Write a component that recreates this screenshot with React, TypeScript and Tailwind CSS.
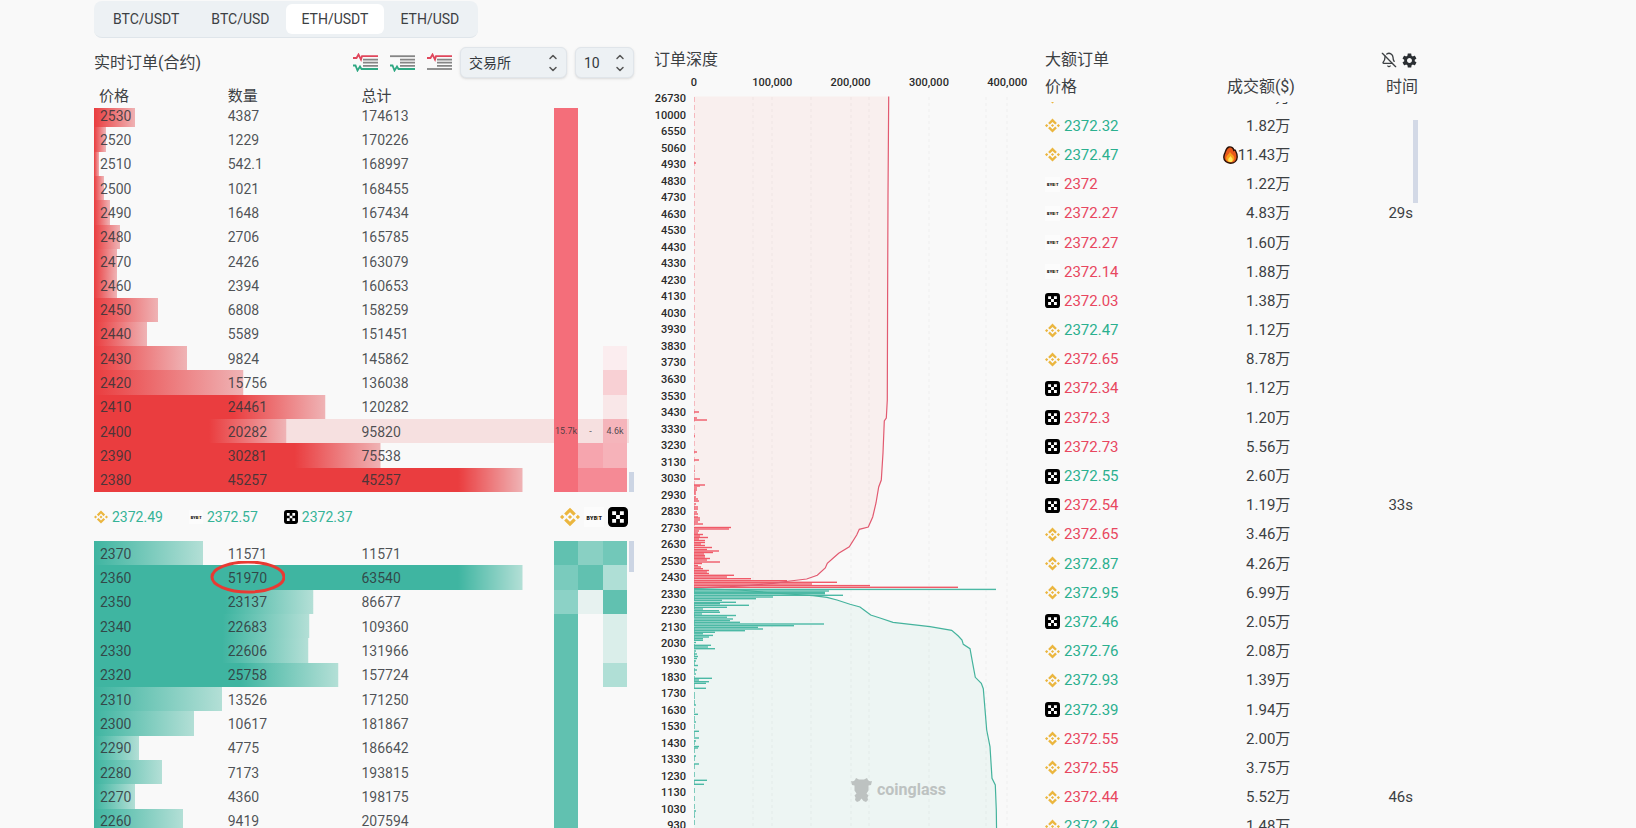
import { useState } from "react";
import { BellOff, ChevronDown, ChevronUp } from "lucide-react";
import { IoMdSettings } from "react-icons/io";

type Exchange = "binance" | "bybit" | "okx";
type Heat = (string | null)[];

interface Level {
  price: number;
  amount: number;
  total: number;
  heat: Heat;
  labels?: string[];
  marked?: boolean;
}

const MAX_AMOUNT = 45257;
const R = "#f46e7a";
const G = "#61c1b0";

const pairs = ["BTC/USDT", "BTC/USD", "ETH/USDT", "ETH/USD"];

const asks: Level[] = [
  { price: 2530, amount: 4387, total: 174613, heat: [R, null, null] },
  { price: 2520, amount: 1229, total: 170226, heat: [R, null, null] },
  { price: 2510, amount: 542.1, total: 168997, heat: [R, null, null] },
  { price: 2500, amount: 1021, total: 168455, heat: [R, null, null] },
  { price: 2490, amount: 1648, total: 167434, heat: [R, null, null] },
  { price: 2480, amount: 2706, total: 165785, heat: [R, null, null] },
  { price: 2470, amount: 2426, total: 163079, heat: [R, null, null] },
  { price: 2460, amount: 2394, total: 160653, heat: [R, null, null] },
  { price: 2450, amount: 6808, total: 158259, heat: [R, null, null] },
  { price: 2440, amount: 5589, total: 151451, heat: [R, null, null] },
  { price: 2430, amount: 9824, total: 145862, heat: [R, null, "#fbedef"] },
  { price: 2420, amount: 15756, total: 136038, heat: [R, null, "#f8d0d4"] },
  { price: 2410, amount: 24461, total: 120282, heat: [R, null, "#f9e7e8"] },
  { price: 2400, amount: 20282, total: 95820, heat: [R, null, "#f5b5bb"], labels: ["15.7k", "-", "4.6k"] },
  { price: 2390, amount: 30281, total: 75538, heat: [R, "#f6a5ae", "#f6b2b9"] },
  { price: 2380, amount: 45257, total: 45257, heat: [R, "#f58a95", "#f58a95"] },
];

const bids: Level[] = [
  { price: 2370, amount: 11571, total: 11571, heat: [G, "#89d0c3", "#72c8b9"] },
  { price: 2360, amount: 51970, total: 63540, heat: ["#7acbbd", G, "#afdfd6"], marked: true },
  { price: 2350, amount: 23137, total: 86677, heat: ["#8cd2c6", "#e7f2f0", G] },
  { price: 2340, amount: 22683, total: 109360, heat: [G, null, "#daeeea"] },
  { price: 2330, amount: 22606, total: 131966, heat: [G, null, "#daeeea"] },
  { price: 2320, amount: 25758, total: 157724, heat: [G, null, "#b0dfd6"] },
  { price: 2310, amount: 13526, total: 171250, heat: [G, null, null] },
  { price: 2300, amount: 10617, total: 181867, heat: [G, null, null] },
  { price: 2290, amount: 4775, total: 186642, heat: [G, null, null] },
  { price: 2280, amount: 7173, total: 193815, heat: [G, null, null] },
  { price: 2270, amount: 4360, total: 198175, heat: [G, null, null] },
  { price: 2260, amount: 9419, total: 207594, heat: [G, null, null] },
];

const trades: { ex: Exchange; price: string; up: boolean; value: string; time?: string; hot?: boolean }[] = [
  { ex: "binance", price: "2372.32", up: true, value: "1.12万" },
  { ex: "binance", price: "2372.32", up: true, value: "1.82万" },
  { ex: "binance", price: "2372.47", up: true, value: "11.43万", hot: true },
  { ex: "bybit", price: "2372", up: false, value: "1.22万" },
  { ex: "bybit", price: "2372.27", up: false, value: "4.83万", time: "29s" },
  { ex: "bybit", price: "2372.27", up: false, value: "1.60万" },
  { ex: "bybit", price: "2372.14", up: false, value: "1.88万" },
  { ex: "okx", price: "2372.03", up: false, value: "1.38万" },
  { ex: "binance", price: "2372.47", up: true, value: "1.12万" },
  { ex: "binance", price: "2372.65", up: false, value: "8.78万" },
  { ex: "okx", price: "2372.34", up: false, value: "1.12万" },
  { ex: "okx", price: "2372.3", up: false, value: "1.20万" },
  { ex: "okx", price: "2372.73", up: false, value: "5.56万" },
  { ex: "okx", price: "2372.55", up: true, value: "2.60万" },
  { ex: "okx", price: "2372.54", up: false, value: "1.19万", time: "33s" },
  { ex: "binance", price: "2372.65", up: false, value: "3.46万" },
  { ex: "binance", price: "2372.87", up: true, value: "4.26万" },
  { ex: "binance", price: "2372.95", up: true, value: "6.99万" },
  { ex: "okx", price: "2372.46", up: true, value: "2.05万" },
  { ex: "binance", price: "2372.76", up: true, value: "2.08万" },
  { ex: "binance", price: "2372.93", up: true, value: "1.39万" },
  { ex: "okx", price: "2372.39", up: true, value: "1.94万" },
  { ex: "binance", price: "2372.55", up: false, value: "2.00万" },
  { ex: "binance", price: "2372.55", up: false, value: "3.75万" },
  { ex: "binance", price: "2372.44", up: false, value: "5.52万", time: "46s" },
  { ex: "binance", price: "2372.24", up: true, value: "1.48万" },
];

// depth chart bars: [y, length]
const askBars = [
  [163, 2], [412, 5], [418, 3], [420, 13], [436, 1], [452, 3], [460, 5], [471, 1], [479, 6], [485, 11], [486, 6],
  [488, 3], [490, 3], [492, 2], [494, 2], [497, 2], [499, 4], [501, 5], [504, 2], [507, 4], [509, 4], [512, 3],
  [514, 4], [517, 4], [518, 6], [520, 6], [522, 4], [524, 9], [527.5, 37], [529, 35], [531, 5], [533, 4], [534.5, 9],
  [536, 6], [537.5, 14], [539, 5], [540.5, 11], [542.5, 11], [544, 7], [545.5, 11], [547.5, 18], [549.5, 13],
  [551, 25], [552.5, 19], [554, 10], [555.5, 11], [557, 11], [558.5, 16], [560, 13], [562, 26], [563.5, 8],
  [565.5, 4], [567, 7], [568.7, 9], [570.5, 15], [572, 13], [573.5, 15], [575.3, 40], [577, 33], [578.7, 57],
  [580.7, 93], [582.3, 143], [584, 118], [585.6, 176], [587.3, 264],
];
const bidBars = [
  [589.4, 302], [591, 135], [592.3, 131], [593.7, 131], [595.3, 149], [597, 79], [598.7, 62], [600.3, 28],
  [602.3, 42], [603.7, 26], [605.3, 55], [607.3, 33], [609, 9], [610.7, 25], [612.3, 26], [614, 8], [615.5, 42],
  [617.2, 33], [619, 39], [620.7, 36], [622.3, 46], [624, 130], [625.7, 100], [627.3, 64], [629, 69], [630.7, 51],
  [632.3, 21], [633.8, 9], [635.4, 19], [637, 15], [638.7, 9], [640.3, 9], [642.5, 2], [645.3, 17], [647, 14],
  [648.7, 21], [651, 2], [654, 3], [656.5, 4], [658.5, 3], [661, 2], [665.5, 4], [670, 3], [674, 2], [678.3, 18],
  [680, 5], [681.7, 15], [683.3, 12], [688.3, 12], [698, 1], [705, 2], [714.3, 4], [722, 2], [731.3, 5], [738, 5],
  [741, 2], [746.5, 5], [748, 4], [756, 2], [764, 5], [780.3, 13], [784.3, 10], [811, 2], [817, 1],
];

const askLine =
  "888.7,96.5 888,196 887.6,300 887.3,400 886.3,418 884.3,421 883,453 881.3,480 878.7,487 876,503 872.7,517 868.3,527 859.3,529.3 856.7,535 849.3,546.7 838.7,553.3 833.3,558 827.3,563.3 825.3,568 817.3,575.3 806.7,579 790,581 773,583.3 750,585.3 730,586.7 694,588";
const bidLine =
  "694,588.5 740,590 773,593 813,595.7 827,597.3 837,600 850,604.3 860,607 864,610 870.7,615 880,618 893,622.3 930,626.7 951.7,630.3 958.3,636 962,640 963.3,644.3 970,648.7 972.7,663.3 975.3,677.3 981.3,683.3 983.3,688.7 986.7,730 990,746.7 992,778.3 995.3,785 996.3,810 996.7,840";

const depthPrices = [26730, 10000, 6550, 5060, ...Array.from({ length: 41 }, (_, i) => 4930 - i * 100)];

function BinanceIcon({ className }: { className: string }) {
  return (
    <svg viewBox="0 0 24 24" className={className} fill="#ebb63f">
      <path d="M12 .8 19 7.8l-2.7 2.7L12 6.2l-4.3 4.3L5 7.8z" />
      <path d="M12 23.2 5 16.2l2.7-2.7 4.3 4.3 4.3-4.3 2.7 2.7z" />
      <path d="m12 9.5 2.5 2.5-2.5 2.5L9.5 12zM2.6 9.4 5.2 12l-2.6 2.6L0 12zM21.4 9.4 24 12l-2.6 2.6-2.6-2.6z" />
    </svg>
  );
}

function BybitIcon({ className }: { className: string }) {
  return (
    <svg viewBox="0 0 24 24" className={className}>
      <rect width="24" height="24" fill="#fcfcfc" />
      <text x="3" y="15" fontSize="6" fontWeight="900" fill="#222" fontFamily="Inter, sans-serif">
        BYB<tspan fill="#e0a030">I</tspan>T
      </text>
    </svg>
  );
}

function OkxIcon({ className }: { className: string }) {
  return (
    <svg viewBox="0 0 24 24" className={className}>
      <rect width="24" height="24" rx="5" fill="#000" />
      <path fill="#fff" d="M5 5h4.7v4.7H5zM14.3 5H19v4.7h-4.7zM9.7 9.7h4.6v4.6H9.7zM5 14.3h4.7V19H5zM14.3 14.3H19V19h-4.7z" />
    </svg>
  );
}

function ExchangeIcon({ ex, className }: { ex: Exchange; className: string }) {
  if (ex === "binance") return <BinanceIcon className={className} />;
  if (ex === "bybit") return <BybitIcon className={className} />;
  return <OkxIcon className={className} />;
}

function FireIcon() {
  return (
    <svg viewBox="0 0 15 18" className="h-[18px] w-[15px]">
      <path
        d="M6 1C8.500.5 10.500 2 10.800 4.300c.6-.4 1.200-.4 1.600.2C13.500 6.500 14.200 8.800 14.200 11c0 3.800-3 6.200-6.700 6.200S.8 14.800.8 11.200c0-2 .8-3.600 1.400-5C3 4 3.500 1.600 6 1z"
        fill="#e8581c"
        stroke="#2a1208"
        strokeWidth="1.4"
      />
      <path d="M7 5.5c.3 2 3.6 3.3 4.2 5.7.5 2.6-1.4 4.8-3.8 4.8s-4.600-1.800-4.200-4.600C3.500 9.200 6.500 8 7 5.500z" fill="#f9a01b" />
      <path d="M7.5 10c.4 1.2 2.3 2 2.2 3.7 0 1.400-1 2.300-2.300 2.300s-2.300-1-2.200-2.300c0-1.500 1.800-2.200 2.300-3.700z" fill="#ffe75a" />
    </svg>
  );
}

function BookIcon({ top, bottom }: { top: boolean; bottom: boolean }) {
  return (
    <svg viewBox="0 0 25 19" className="h-[19px] w-[25px]" fill="none" strokeWidth="1.8">
      {top ? <path d="M0 5h3.500L5.500 1.500 8 6.500 9 3.200H25" stroke="#e0475c" /> : <path d="M0 3.2h25" stroke="#858585" />}
      <path d="M10 6.600h15M10 9.700h15M10 12.800h15" stroke="#858585" />
      {bottom ? <path d="M0 12.500h2.500l2 5 2.500-4 1.500 2.500H25" stroke="#2fa883" /> : <path d="M0 16h25" stroke="#858585" />}
    </svg>
  );
}

function Picker({ label, options, className }: { label: string; options: string[]; className: string }) {
  return (
    <div className={`relative ${className}`}>
      <select
        aria-label={label}
        className="h-[31px] w-full appearance-none rounded-md border border-[#e0e5ea] bg-[#edf1f4] pl-2 text-sm text-[#33383d] shadow-sm"
      >
        {options.map((option) => (
          <option key={option}>{option}</option>
        ))}
      </select>
      <span className="pointer-events-none absolute inset-y-0 right-2 flex flex-col items-center justify-center text-[#555]">
        <ChevronUp size={12} strokeWidth={3} />
        <ChevronDown size={12} strokeWidth={3} />
      </span>
    </div>
  );
}

function LevelRows({ levels, side }: { levels: Level[]; side: "ask" | "bid" }) {
  const [from, to] = side === "ask" ? ["#ea3d3f", "#efb3b5"] : ["#3fb5a1", "#b3dfd6"];

  return (
    <tbody>
      {levels.map((level) => {
        const ratio = Math.min(level.amount / MAX_AMOUNT, 1);
        const solid = ratio > 0.9 ? 0.85 : ratio > 0.6 ? 0.7 : ratio > 0.4 ? 0.6 : 0;
        // the longest bar takes 80% of the row
        const end = ratio * 80;
        return (
          <tr
            key={level.price}
            className={level.labels ? "bg-[#f6e0e0]" : ""}
            style={{
              backgroundImage: `linear-gradient(to right, ${from} ${end * solid}%, ${to} ${end}%, transparent ${end}%)`,
            }}
          >
            <td className="pt-px pl-[6px]">{level.price}</td>
            <td className="pt-px">
              <span className="relative">
                {level.amount}
                {level.marked && (
                  <svg
                    viewBox="0 0 76 34"
                    className="absolute top-1/2 left-1/2 h-[34px] w-[76px] max-w-none -translate-x-1/2 -translate-y-1/2"
                  >
                    <ellipse cx="39" cy="16" rx="36" ry="15" fill="none" stroke="#e83a33" strokeWidth="3" />
                  </svg>
                )}
              </span>
            </td>
            <td className="pt-px">{level.total}</td>
            {level.heat.map((color, i) => (
              <td key={i} className="text-center text-[9px]" style={{ backgroundColor: color ?? undefined }}>
                {level.labels?.[i]}
              </td>
            ))}
            <td />
          </tr>
        );
      })}
    </tbody>
  );
}

function BookColumns() {
  return (
    <colgroup>
      <col className="w-[25%]" />
      <col className="w-[25%]" />
      <col />
      <col className="w-[24px]" />
      <col className="w-[25px]" />
      <col className="w-[24px]" />
      <col className="w-[2px]" />
    </colgroup>
  );
}

function OrderBook() {
  return (
    <section>
      <div className="flex h-[43px] items-center">
        <h2 className="flex-1 text-base">实时订单(合约)</h2>
        <div className="mr-2 flex gap-3">
          <button aria-label="全部"><BookIcon top bottom /></button>
          <button aria-label="买单"><BookIcon top={false} bottom /></button>
          <button aria-label="卖单"><BookIcon top bottom={false} /></button>
        </div>
        <Picker label="交易所" options={["交易所", "Binance", "Bybit", "OKX"]} className="w-[107px]" />
        <Picker label="精度" options={["10", "1", "100"]} className="ml-2 w-[59px]" />
      </div>

      <div className="flex h-6 items-center pr-[5px] text-[15px]">
        <span className="w-[25%] pl-[5px]">价格</span>
        <span className="w-[25%]">数量</span>
        <span>总计</span>
      </div>

      <div className="flex h-[384px] items-end justify-between overflow-hidden">
        <table className="h-[389px] w-full table-fixed text-sm leading-4 text-[#303438]/85">
          <BookColumns />
          <LevelRows levels={asks} side="ask" />
        </table>
        <div className="h-5 w-[5px] shrink-0 bg-[#ccd5e4]" />
      </div>

      <div className="flex h-[49px] items-center gap-[26px] pr-[6px] text-sm text-[#35b397]">
        <span className="flex items-center gap-1"><BinanceIcon className="size-[14px]" />2372.49</span>
        <span className="flex items-center gap-1"><BybitIcon className="size-[14px]" />2372.57</span>
        <span className="flex items-center gap-1"><OkxIcon className="size-[14px]" />2372.37</span>
        <span className="ml-auto flex items-center gap-1">
          <BinanceIcon className="size-5" />
          <BybitIcon className="size-5" />
          <OkxIcon className="size-5" />
        </span>
      </div>

      <div className="flex items-start justify-between">
        <table className="h-[292px] w-full table-fixed text-sm leading-4 text-[#303438]/85">
          <BookColumns />
          <LevelRows levels={bids} side="bid" />
        </table>
        <div className="h-[31px] w-[5px] shrink-0 bg-[#ccd5e4]" />
      </div>
    </section>
  );
}

function DepthChart() {
  return (
    <section>
      <h2 className="flex h-[34px] items-end text-base">订单深度</h2>
      <svg viewBox="654 72 371 756" className="w-full overflow-visible" fontSize="11" fontWeight="500" fill="#2a2a2a">
        {[0, 100000, 200000, 300000, 400000].map((v) => (
          <text key={v} x={694 + v * 0.000783} y="86" textAnchor="middle">
            {v.toLocaleString("en-US")}
          </text>
        ))}
        <polygon points={`694,96.5 ${askLine}`} fill="#f9efee" />
        <polygon points={`${bidLine} 694,840`} fill="#edf5f3" />
        {[753, 772, 811, 851, 869, 929, 986, 1007].map((x) => (
          <path key={x} d={`M${x} 97V840`} stroke="#000" strokeOpacity=".04" strokeDasharray="3 3" />
        ))}
        <path d="M694.5 97V588" stroke="#f3a4ab" strokeOpacity=".7" strokeDasharray="5 3" />
        <path d="M694.5 588V840" stroke="#7fcbbd" strokeDasharray="5 3" />
        {askBars.map(([y, w]) => (
          <rect key={y} x="694" y={y - 0.7} width={w} height="1.4" fill="#f05a68" />
        ))}
        {bidBars.map(([y, w]) => (
          <rect key={y} x="694" y={y - 0.7} width={w} height="1.4" fill="#4cb9a5" />
        ))}
        <polyline points={askLine} fill="none" stroke="#e25a70" strokeWidth="1.2" />
        <polyline points={bidLine} fill="none" stroke="#45b39d" strokeWidth="1.2" />
        {depthPrices.map((price, i) => (
          <text key={price} x="686" y={102 + i * 16.53} textAnchor="end">
            {price}
          </text>
        ))}
        <g fill="#bdc2c1">
          <path d="M851 781q2.500 1 4-1l1-2 3 1.500h5l3-1.500 1 2q1.500 2 4 1l-1 4-2.500.5v5l-2 3 2 2-1 2 .5 2.500-2 2-2.500-1-2-2.500-2 2.500-2.500 1-2-2 .5-2.500-1-2 2-2-2-3v-5l-2.500-.5z" />
          <text x="877" y="795" fontSize="16" fontWeight="700">coinglass</text>
        </g>
      </svg>
    </section>
  );
}

function LargeTrades() {
  return (
    <section>
      <div className="flex h-[34px] items-end justify-between">
        <h2 className="text-base">大额订单</h2>
        <div className="flex h-6 items-center gap-1">
          <button aria-label="静音"><BellOff size={16} /></button>
          <button aria-label="设置"><IoMdSettings size={17} className="text-[#2b2f33]" /></button>
        </div>
      </div>
      <div className="flex h-[30px] items-center text-base">
        <span className="flex-1">价格</span>
        <span>成交额($)</span>
        <span className="w-[33%] text-right">时间</span>
      </div>
      <div className="flex items-start overflow-hidden">
        <table className="-mt-5 h-[759px] w-full table-fixed text-[15px] leading-5">
          <tbody>
            {trades.map((t, i) => (
              <tr key={i}>
                <td>
                  <span className={t.up ? "flex items-center gap-1 text-[#2bb08f]" : "flex items-center gap-1 text-[#e8475f]"}>
                    <ExchangeIcon ex={t.ex} className="size-[15px]" />
                    {t.price}
                  </span>
                </td>
                <td>
                  <span className="flex items-center justify-end">
                    {t.hot && <FireIcon />}
                    {t.value}
                  </span>
                </td>
                <td className="text-right">{t.time}</td>
              </tr>
            ))}
          </tbody>
        </table>
        <div className="mt-[18px] h-[83px] w-[5px] shrink-0 bg-[#d3d9e6]" />
      </div>
    </section>
  );
}

export default function App() {
  const [pair, setPair] = useState("ETH/USDT");

  return (
    <main className="h-screen overflow-hidden bg-[#f9f9f9] pt-px pr-[218px] pl-[94px] font-[Roboto,'Noto_Sans_CJK_SC',sans-serif] text-[#3c4043]">
      <nav className="flex h-[37px] w-fit rounded-lg border-b border-[#dfe5ea] bg-[#edf1f4] p-[3px]">
        {pairs.map((name) => (
          <button
            key={name}
            onClick={() => setPair(name)}
            className={name === pair ? "rounded-md bg-white px-4 text-sm" : "rounded-md px-4 text-sm"}
          >
            {name}
          </button>
        ))}
      </nav>
      <div className="grid grid-cols-[540fr_371fr_373fr] gap-5">
        <div className="pt-[3px]"><OrderBook /></div>
        <DepthChart />
        <LargeTrades />
      </div>
    </main>
  );
}
